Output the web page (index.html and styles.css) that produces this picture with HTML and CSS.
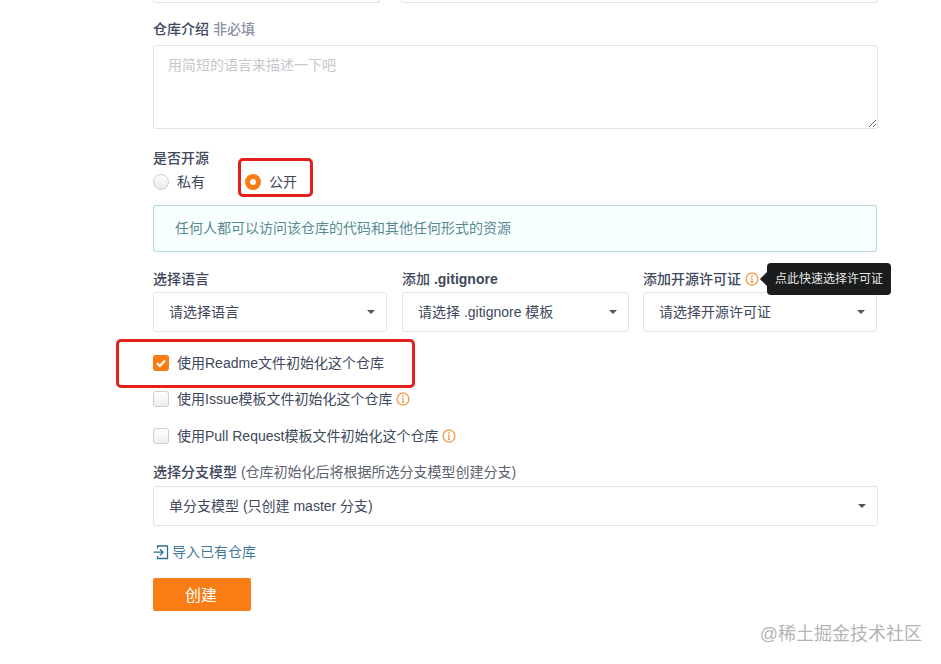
FILE: index.html
```html
<!DOCTYPE html>
<html lang="zh-CN">
<head>
<meta charset="utf-8">
<title>新建仓库</title>
<link rel="stylesheet" href="styles.css">
</head>
<body>
<main class="form">
  <div class="top-row"><div class="cut cut-a"></div><div class="cut cut-b"></div></div>

  <div class="label intro-label">仓库介绍 <span class="muted">非必填</span></div>
  <textarea class="textarea" placeholder="用简短的语言来描述一下吧"></textarea>

  <div class="label open-label">是否开源</div>
  <div class="radios">
    <span class="radio-item r-private"><i class="radio"></i>私有</span>
    <span class="radio-item r-public"><i class="radio on"></i>公开</span>
    <span class="mark mark-radio"></span>
  </div>
  <div class="alert">任何人都可以访问该仓库的代码和其他任何形式的资源</div>

  <div class="selects">
    <div class="field">
      <div class="label">选择语言</div>
      <div class="select"><span>请选择语言</span><i class="caret"></i></div>
    </div>
    <div class="field">
      <div class="label"><span>添加 <b>.gitignore</b></span></div>
      <div class="select"><span>请选择 .gitignore 模板</span><i class="caret"></i></div>
    </div>
    <div class="field">
      <div class="label">添加开源许可证
        <svg class="info" viewBox="0 0 14 14"><circle cx="7" cy="7" r="5.9"/><path d="M7 6.2v4M5.9 10.3h2.2M5.9 6.2H7"/><circle class="dot" cx="7" cy="4" r=".9"/></svg>
        <span class="tooltip">点此快速选择许可证</span>
      </div>
      <div class="select"><span>请选择开源许可证</span><i class="caret"></i></div>
    </div>
  </div>

  <div class="checks">
    <div class="check-row readme"><span class="check on"><svg viewBox="0 0 16 16"><path d="M4 8.3l2.8 2.6L12 5.6"/></svg></span>使用Readme文件初始化这个仓库<span class="mark mark-check"></span></div>
    <div class="check-row issue"><span class="check"></span>使用Issue模板文件初始化这个仓库<svg class="info" viewBox="0 0 14 14"><circle cx="7" cy="7" r="5.9"/><path d="M7 6.2v4M5.9 10.3h2.2M5.9 6.2H7"/><circle class="dot" cx="7" cy="4" r=".9"/></svg></div>
    <div class="check-row pr"><span class="check"></span>使用Pull Request模板文件初始化这个仓库<svg class="info" viewBox="0 0 14 14"><circle cx="7" cy="7" r="5.9"/><path d="M7 6.2v4M5.9 10.3h2.2M5.9 6.2H7"/><circle class="dot" cx="7" cy="4" r=".9"/></svg></div>
  </div>

  <div class="label branch-label">选择分支模型 <span class="hint">(仓库初始化后将根据所选分支模型创建分支)</span></div>
  <div class="select select-wide"><span>单分支模型 (只创建 master 分支)</span><i class="caret"></i></div>

  <a class="import"><svg viewBox="0 0 16 16"><path d="M4.5 4.5V2h10v12.5h-10V12M.5 8.2h9M7 5.2l3 3-3 3"/></svg>导入已有仓库</a>
  <button class="submit">创建</button>
</main>
<div class="watermark">@稀土掘金技术社区</div>
</body>
</html>
```
FILE: styles.css
```css
* { box-sizing: border-box; }
html, body { margin: 0; height: 664px; overflow: hidden; background: #fff; }
body {
  position: relative;
  font-family: "Liberation Sans", "Noto Sans CJK SC", sans-serif;
  font-size: 14px;
  color: #40485b;
}
.form { width: 725px; margin-left: 153px; display: flex; flex-direction: column; align-items: flex-start; }
.top-row { width: 100%; height: 3px; display: flex; gap: 21px; }
.cut { height: 3px; border: 1px solid #e2e3e5; border-top: 0; border-radius: 0 0 3px 3px; }
.cut-a { width: 227px; }
.cut-b { flex: 1; }
.label { font-size: 14px; line-height: 18px; font-weight: 500; color: #40485b; white-space: nowrap; }
.label b { font-weight: 700; }
.muted { color: #8c92a4; }
.hint { font-weight: 400; color: #5c6270; }
.intro-label { margin-top: 17px; }
.textarea {
  display: block; width: 725px; height: 84px; margin-top: 7px; padding: 10px 14px;
  border: 1px solid #e2e3e5; border-radius: 3px; outline: 0;
  font: 14px/18px "Liberation Sans", "Noto Sans CJK SC", sans-serif; color: #40485b;
}
.textarea::placeholder { color: #c5c7cc; opacity: 1; }
.open-label { margin-top: 20px; }
.radios { position: relative; display: flex; height: 18px; margin-top: 6px; width: 100%; }
.radio-item { display: flex; align-items: center; gap: 8px; line-height: 18px; color: #40485b; }
.r-private { width: 92px; }
.radio { width: 16px; height: 16px; border-radius: 50%; border: 1px solid #cfcfd1; background: linear-gradient(#fff, #eaeaeb); }
.radio.on { border: 5px solid #f97c15; background: #fff; }
.alert {
  width: 724px; height: 47px; margin-top: 14px; padding: 0 0 4px 21px;
  display: flex; align-items: center;
  background: #f8ffff; border: 1px solid #b7d9dd; border-radius: 3px;
  color: #5a8a90; box-shadow: 0 0 1px #c9e3e6;
}
.selects { display: flex; gap: 15px; margin-top: 18px; width: 724px; }
.field { width: 234px; }
.field:nth-child(2) { width: 227px; margin-right: -1px; }
.field .label { height: 18px; display: flex; align-items: center; gap: 4px; position: relative; }
.select {
  height: 40px; padding: 0 13px 2px 15px;
  display: flex; align-items: center; justify-content: space-between;
  border: 1px solid #e2e3e5; border-radius: 3px; background: #fff;
  color: #40485b;
}
.field .label + .select { margin-top: 4px; }
.caret { width: 0; height: 0; border: 4px solid transparent; border-top-color: #50545c; border-bottom: 0; margin: 2px -2px 0 0; }
.info { width: 14px; height: 14px; flex: none; fill: none; stroke: #f4a35c; stroke-width: 1.5; }
.info .dot { fill: #f4a35c; stroke: none; }
.tooltip {
  position: absolute; left: 124px; top: -7px; width: 124px; height: 32px;
  display: flex; align-items: center; justify-content: center;
  background: #1b1c1d; color: #e8e8e8; border-radius: 4px;
  font-size: 12px; font-weight: 400;
}
.tooltip::before {
  content: ""; position: absolute; left: -5px; top: 11px; width: 10px; height: 10px;
  background: #1b1c1d; transform: rotate(45deg);
}
.checks { position: relative; width: 100%; }
.check-row { position: relative; display: flex; align-items: center; line-height: 18px; color: #40485b; white-space: nowrap; }
.check-row .info { margin-left: 4px; }
.readme { margin-top: 22px; }
.issue { margin-top: 18px; }
.pr { margin-top: 19px; }
.check {
  width: 16px; height: 16px; margin-right: 8px; border: 1px solid #cfcfd1; border-radius: 3px;
  background: linear-gradient(#fff, #eeeeef);
}
.check.on { border: 0; background: #f97c15; }
.check svg { display: block; width: 16px; height: 16px; fill: none; stroke: #fff; stroke-width: 2.2; }
.mark { position: absolute; border: 3px solid #e3201b; border-radius: 5px; pointer-events: none; }
.mark-radio { left: 85px; top: -15px; width: 75px; height: 39px; }
.mark-check { left: -37px; top: -15px; width: 299px; height: 49px; }
.branch-label { margin-top: 18px; }
.select-wide { width: 725px; height: 40px; margin-top: 5px; }
.import { display: flex; align-items: center; gap: 3px; margin-top: 17px; line-height: 18px; color: #3f7a9c; }
.import svg { width: 16px; height: 16px; fill: none; stroke: #2f6f95; stroke-width: 1.3; }
.submit {
  width: 98px; height: 33px; margin-top: 17px; padding: 0 2px 2px 0; border: 0; border-radius: 2px;
  background: #f97c15; color: #fff; font: 16px "Liberation Sans", "Noto Sans CJK SC", sans-serif;
}
.watermark { position: absolute; right: 19px; top: 623px; font-size: 18px; line-height: 22px; color: #b4b4b4; }
```
